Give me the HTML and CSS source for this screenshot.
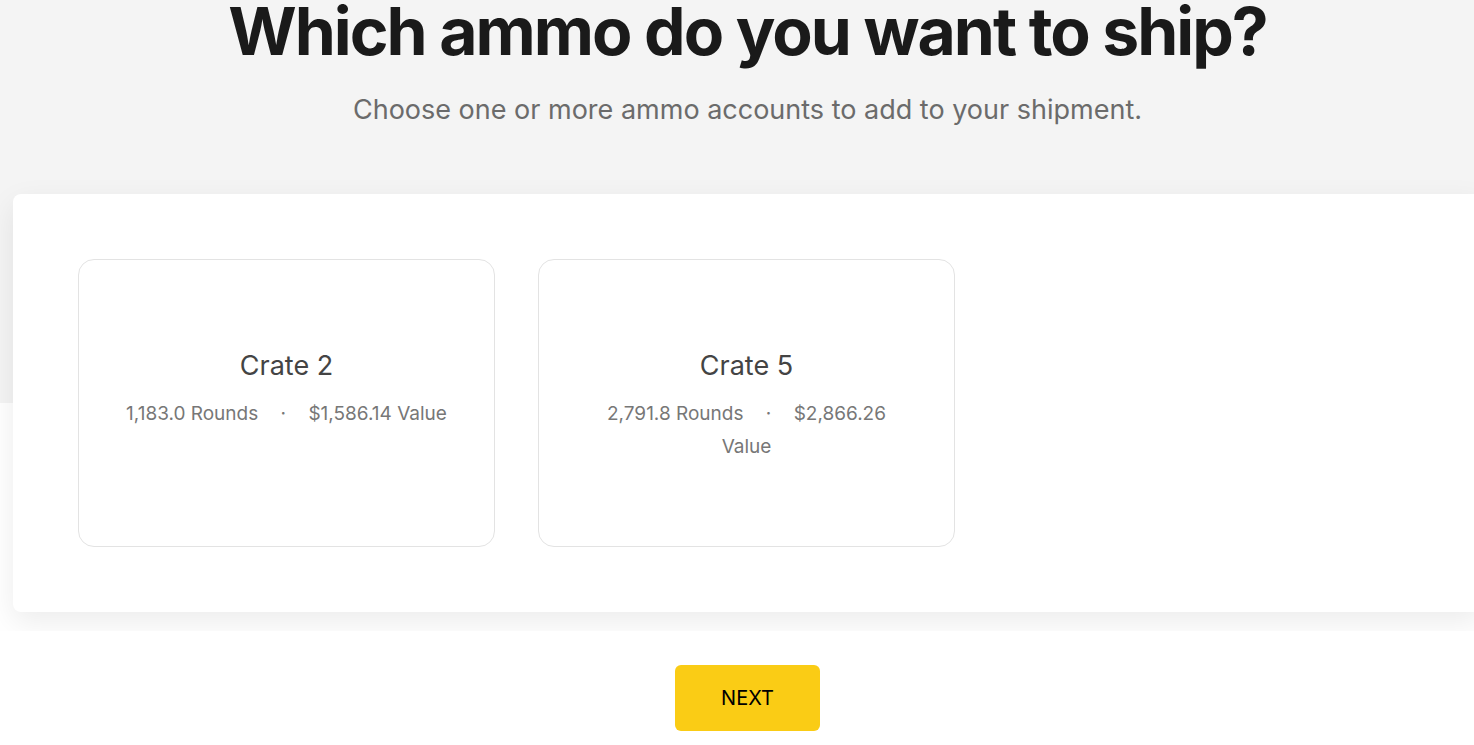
FILE: index.html
```html
<!DOCTYPE html>
<html lang="en">
<head>
  <meta charset="UTF-8" />
  <meta name="viewport" content="width=device-width, initial-scale=1.0" />
  <title>Ship ammo</title>
  <link rel="stylesheet" href="styles.css">
</head>
<body>
  <div class="page">
    <section class="hero">
      <h1>Which ammo do you want to ship?</h1>
      <p class="subtitle">Choose one or more ammo accounts to add to your shipment.</p>
    </section>

    <section class="panel">
      <div class="crate">
        <h2>Crate 2</h2>
        <p class="stats">
          <span>1,183.0 Rounds</span>
          <span class="dot">·</span>
          <span>$1,586.14 Value</span>
        </p>
      </div>
      <div class="crate">
        <h2>Crate 5</h2>
        <p class="stats">
          <span>2,791.8 Rounds</span>
          <span class="dot">·</span>
          <span>$2,866.26 Value</span>
        </p>
      </div>
    </section>

    <footer class="actions">
      <button type="button">NEXT</button>
    </footer>
  </div>
</body>
</html>
```

FILE: styles.css
```css
html, body {
  margin: 0;
  overflow-x: hidden;
}
body {
  font-family: Inter, 'Noto Sans', sans-serif;
  background: #fff;
}
.page {
  width: 1495px;
}
.hero {
  background: #f4f4f4;
  text-align: center;
  padding-bottom: 275px;
}
h1 {
  margin: 0;
  font-size: 66px;
  line-height: 62px;
  font-weight: 700;
  letter-spacing: -2px;
  color: #1a1a1a;
}
.subtitle {
  margin: 30px 0 0;
  font-size: 27px;
  line-height: 36px;
  color: #6b6b6b;
}
.panel {
  display: flex;
  gap: 43px;
  margin: -209px 12px 0 13px;
  padding: 65px;
  background: #fff;
  border-radius: 8px;
  box-shadow: 0 10px 30px rgba(0, 0, 0, 0.08);
}
.crate {
  width: 417px;
  height: 288px;
  box-sizing: border-box;
  padding: 89px 44px 0;
  border: 1px solid #e3e3e3;
  border-radius: 16px;
  text-align: center;
}
h2 {
  margin: 0;
  font-size: 27px;
  line-height: 34px;
  font-weight: 400;
  color: #444;
}
.stats {
  margin: 14px 0 0;
  font-size: 19px;
  line-height: 33px;
  color: #777;
}
.dot {
  margin: 0 17px;
}
.actions {
  position: relative;
  margin-top: 19px;
  padding: 34px 0 15px;
  background: #fff;
  text-align: center;
}
button {
  width: 145px;
  height: 66px;
  font-family: Inter, sans-serif;
  font-size: 20px;
  color: #000;
  background: #facc15;
  border: none;
  border-radius: 6px;
  cursor: pointer;
}
```
